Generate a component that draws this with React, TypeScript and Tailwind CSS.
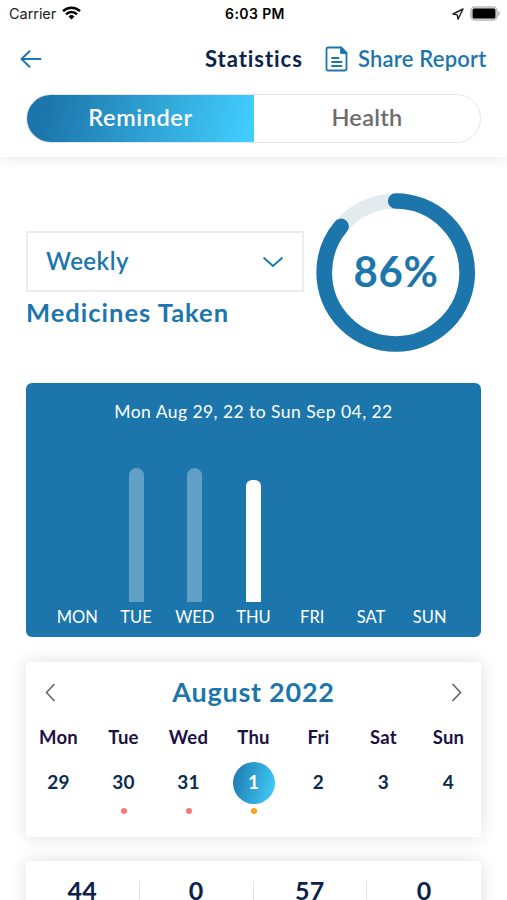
import React from 'react';

interface DayEntry {
  label: string;
  date: number;
  dot?: 'missed' | 'partial';
  selected?: boolean;
}

const days: DayEntry[] = [
  { label: 'Mon', date: 29 },
  { label: 'Tue', date: 30, dot: 'missed' },
  { label: 'Wed', date: 31, dot: 'missed' },
  { label: 'Thu', date: 1, dot: 'partial', selected: true },
  { label: 'Fri', date: 2 },
  { label: 'Sat', date: 3 },
  { label: 'Sun', date: 4 },
];

const bars = [
  { label: 'MON', height: 0, active: false },
  { label: 'TUE', height: 134, active: false },
  { label: 'WED', height: 134, active: false },
  { label: 'THU', height: 122, active: true },
  { label: 'FRI', height: 0, active: false },
  { label: 'SAT', height: 0, active: false },
  { label: 'SUN', height: 0, active: false },
];

const totals = [44, 0, 57, 0];

const StatusBar: React.FC = () => (
  <div className="flex h-7 items-center justify-between pl-[9px] pr-[7px] font-['Inter',sans-serif] text-black">
    <div className="flex w-[120px] items-center gap-[6px]">
      <span className="text-[14.5px] leading-none tracking-[-0.05px] text-[#222]">Carrier</span>
      <svg className="-mt-[2px]" width="19" height="14" viewBox="0 0 19 14" fill="none" stroke="#000" strokeWidth="2.5">
        <path d="M1 5.1a12.2 12.2 0 0 1 17 0" />
        <path d="M4 8.3a7.9 7.9 0 0 1 11 0" />
        <path d="M9.5 13.6 6.5 10.5a4.3 4.3 0 0 1 6 0Z" fill="#000" stroke="none" />
      </svg>
    </div>
    <span className="text-[14px] font-semibold leading-none tracking-[0.4px]">6:03 PM</span>
    <div className="flex w-[119px] items-center justify-end gap-[6px]">
      <svg width="12" height="12" viewBox="0 0 12 12" fill="none" stroke="#222" strokeWidth="1.4" strokeLinejoin="round">
        <path d="M11 1 1 6l4.300.900.700 4.300Z" />
      </svg>
      <svg className="-mt-px" width="30" height="15" viewBox="0 0 30 15">
        <rect x="0.9" y="0.9" width="26.2" height="13.2" rx="4" fill="#d8d8d8" stroke="#b9b9b9" strokeWidth="1.4" />
        <rect x="2.6" y="2.6" width="22.8" height="9.8" rx="1.5" fill="#000" />
        <path d="M28.3 5v5c2-.8 2-4.2 0-5Z" fill="#aaa" />
      </svg>
    </div>
  </div>
);

const Header: React.FC = () => (
  <header className="h-[157px] bg-white shadow-[0_2px_14px_rgba(0,0,0,0.09)]">
    <StatusBar />
    <div className="flex h-[62px] items-center px-[20px]">
      <svg width="22" height="18" viewBox="0 0 22 18" fill="none" stroke="#1c76ab" strokeWidth="1.9" strokeLinecap="round" strokeLinejoin="round">
        <path d="M20.5 9H1.5M9.5 1.2 1.5 9l8 7.800" />
      </svg>
      <h1 className="-mt-[2px] ml-[163px] w-[98px] whitespace-nowrap text-[22px] font-bold tracking-[0.95px] text-[#0b2349]">Statistics</h1>
      <div className="ml-[22px] flex items-center gap-[10px] text-[#1c76ab]">
        <svg width="23" height="26" viewBox="0 0 23 26" fill="none" stroke="currentColor" strokeWidth="1.8" strokeLinecap="round">
          <path d="M3 1.5h13l5.5 5.5v16a1.5 1.5 0 0 1-1.5 1.5h-17a1.500 1.500 0 0 1-1.500-1.500v-20a1.500 1.500 0 0 1 1.500-1.500Z" />
          <path d="M16 1.5v5.500h5.500Z" fill="currentColor" strokeLinejoin="round" />
          <path d="M7 12h6.500M7 16h9.500M7 20h9.500" />
        </svg>
        <span className="-mt-[2px] whitespace-nowrap text-[22px] font-semibold tracking-[0.2px]">Share Report</span>
      </div>
    </div>
    <div className="mx-[26px] mt-[4px] flex h-[49px] overflow-hidden rounded-full border border-[#e2e6e8] text-[23.5px] font-semibold">
      <button className="w-[227px] bg-linear-[105deg] from-[#1c76ab] from-10% to-[#43d0ff] pb-px tracking-[0.6px] text-white">Reminder</button>
      <button className="flex-1 pb-px tracking-[0.3px] text-[#6d6d6d]">Health</button>
    </div>
  </header>
);

const ProgressRing: React.FC<{ value: number }> = ({ value }) => {
  const radius = 71.5;
  const length = 2 * Math.PI * radius;

  return (
    <div className="grid size-[160px] place-items-center">
      <svg className="col-start-1 row-start-1 -rotate-90" width="160" height="160" viewBox="0 0 160 160" fill="none" strokeWidth="15.7">
        <circle cx="80.500" cy="79.700" r={radius} stroke="#e3ebef" />
        <circle cx="80.500" cy="79.700" r={radius} stroke="#1c76ab" strokeLinecap="round" strokeDasharray={`${(length * value) / 100} ${length}`} />
      </svg>
      <span className="col-start-1 row-start-1 -mt-[4px] text-[42px] font-bold leading-none tracking-[0.6px] text-[#1c76ab]">{value}%</span>
    </div>
  );
};

const WeekChart: React.FC = () => (
  <section className="mx-[26px] mt-[30px] flex h-[254px] flex-col rounded-[6px] bg-[#1c76ab] text-white">
    <p className="pt-[17px] text-center text-[17.5px] leading-6 tracking-[0.45px]">Mon Aug 29, 22 to Sun Sep 04, 22</p>
    <div className="mx-[22px] flex flex-1 pb-[8px]">
      {bars.map((bar) => (
        <div key={bar.label} className="flex flex-1 flex-col items-center justify-end">
          <div
            className={bar.active ? 'w-[15px] rounded-t-[6px] bg-white' : 'w-[15px] rounded-t-full bg-[#619fc4]'}
            style={{ height: bar.height }}
          />
          <span className="mt-[3px] text-[16.5px] leading-6">{bar.label}</span>
        </div>
      ))}
    </div>
  </section>
);

const Calendar: React.FC = () => (
  <section className="mx-[26px] mt-[25px] h-[175px] rounded-[2px] bg-white shadow-[0_0_18px_rgba(0,0,0,0.13)]">
    <div className="flex h-[61px] items-center justify-between px-[19px]">
      <svg width="11" height="19" viewBox="0 0 11 19" fill="none" stroke="#666" strokeWidth="1.6">
        <path d="M9.5 1 1.5 9.5l8 8.5" />
      </svg>
      <h2 className="text-[27px] font-bold tracking-[0.75px] text-[#1c76ab]">August 2022</h2>
      <svg width="11" height="19" viewBox="0 0 11 19" fill="none" stroke="#666" strokeWidth="1.6">
        <path d="m1.5 1 8 8.5-8 8.5" />
      </svg>
    </div>
    <div className="-mt-px grid grid-cols-7 text-center">
      {days.map((day) => (
        <div key={day.label} className="flex flex-col items-center">
          <span className="text-[18.5px] font-bold leading-[30px] tracking-[0.2px] text-[#1b1145]">{day.label}</span>
          <span
            className={
              day.selected
                ? 'mt-[10px] flex size-[42px] items-center justify-center rounded-full bg-linear-[105deg] from-[#1c76ab] to-[#43d0ff] pb-[2px] text-[19px] font-bold text-white'
                : 'mt-[10px] flex size-[42px] items-center justify-center pb-[2px] text-[19px] font-bold tracking-[0.3px] text-[#0b2c50]'
            }
          >
            {day.date}
          </span>
          {day.dot && (
            <span className={day.dot === 'missed' ? 'mt-[4px] size-[6px] rounded-full bg-[#f47b70]' : 'mt-[4px] size-[6px] rounded-full bg-[#f9a11b]'} />
          )}
        </div>
      ))}
    </div>
  </section>
);

const Totals: React.FC = () => (
  <section className="mx-[26px] mt-[24px] grid h-[100px] grid-cols-4 rounded-[2px] bg-white pt-[20px] shadow-[0_0_18px_rgba(0,0,0,0.13)]">
    {totals.map((total, index) => (
      <div key={index} className="h-[60px] border-r border-[#dfe3e6] text-center text-[25px] font-bold leading-[18px] tracking-[0.3px] text-[#0b2349] last:border-r-0">
        {total}
      </div>
    ))}
  </section>
);

const App: React.FC = () => (
  <div className="h-[900px] w-[507px] overflow-hidden bg-white font-['Lato',sans-serif]">
    <Header />
    <div className="flex pl-[26px] pt-[36px]">
      <div className="mt-[38px] w-[278px]">
        <div className="flex h-[61px] items-center justify-between border-2 border-[#ededed] px-[18px] text-[24px] font-semibold text-[#1c76ab]">
          <span className="-mt-[2px] tracking-[0.5px]">Weekly</span>
          <svg width="22" height="12" viewBox="0 0 22 12" fill="none" stroke="currentColor" strokeWidth="1.8" strokeLinejoin="round">
            <path d="m1.5 1.5 9.500 8.500 9.500-8.500" />
          </svg>
        </div>
        <h2 className="mt-[4px] whitespace-nowrap text-[25.5px] font-bold leading-8 tracking-[1px] text-[#1c76ab]">Medicines Taken</h2>
      </div>
      <div className="ml-[12px]">
        <ProgressRing value={86} />
      </div>
    </div>
    <WeekChart />
    <Calendar />
    <Totals />
  </div>
);

export default App;
